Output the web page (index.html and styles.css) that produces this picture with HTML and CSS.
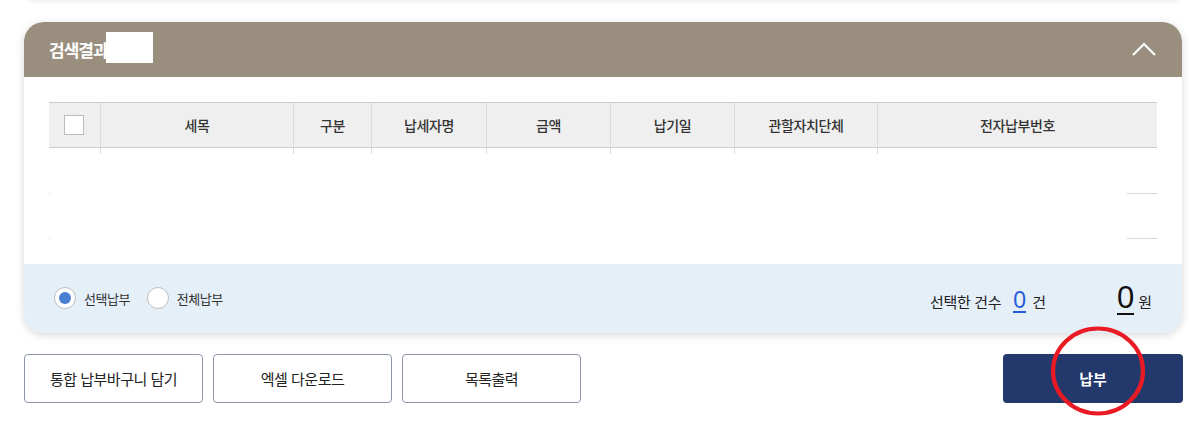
FILE: index.html
```html
<!DOCTYPE html>
<html lang="ko">
<head>
<meta charset="utf-8">
<link rel="stylesheet" href="styles.css">
</head>
<body>
<div class="page">
  <div class="prev-card"></div>
  <section class="card">
    <header class="card-head">
      <h2 class="card-title">검색결과<span class="redact"></span></h2>
      <svg class="chev" width="24" height="14" viewBox="0 0 24 14"><path d="M1 13 L12 2 L23 13" fill="none" stroke="#fff" stroke-width="2.2"/></svg>
    </header>
    <div class="card-body">
      <div class="grid thead">
        <div class="cell"><span class="checkbox"></span></div>
        <div class="cell">세목</div>
        <div class="cell">구분</div>
        <div class="cell">납세자명</div>
        <div class="cell">금액</div>
        <div class="cell">납기일</div>
        <div class="cell">관할자치단체</div>
        <div class="cell">전자납부번호</div>
      </div>
      <div class="grid stub">
        <div class="cell"></div><div class="cell"></div><div class="cell"></div><div class="cell"></div>
        <div class="cell"></div><div class="cell"></div><div class="cell"></div><div class="cell"></div>
      </div>
      <div class="ghost ghost-1"><span class="dot"></span><span class="line"></span></div>
      <div class="ghost ghost-2"><span class="dot"></span><span class="line"></span></div>
    </div>
    <footer class="card-foot">
      <div class="radios">
        <label class="radio"><span class="circle on"></span>선택납부</label>
        <label class="radio"><span class="circle"></span>전체납부</label>
      </div>
      <div class="summary">
        <span class="sum-label">선택한 건수</span>
        <span class="count">0</span>
        <span class="unit">건</span>
        <span class="amount">0</span>
        <span class="unit unit-won">원</span>
      </div>
    </footer>
  </section>
  <div class="actions">
    <div class="left-btns">
      <button class="btn">통합 납부바구니 담기</button>
      <button class="btn">엑셀 다운로드</button>
      <button class="btn">목록출력</button>
    </div>
    <div class="pay-wrap">
      <button class="btn-pay">납부</button>
      <svg class="mark" width="98" height="92" viewBox="0 0 98 92"><ellipse cx="49" cy="46" rx="45" ry="42.5" fill="none" stroke="#ea1a24" stroke-width="4.2"/></svg>
    </div>
  </div>
</div>
</body>
</html>
```

FILE: styles.css
```css
* { box-sizing: border-box; }
html, body { margin: 0; padding: 0; background: #fff; }
body {
  font-family: "Noto Sans CJK KR", "Noto Sans", sans-serif;
  color: #333;
  width: 1189px;
  height: 437px;
  overflow: hidden;
}
.page { padding: 0 6px 0 24px; }
.prev-card {
  height: 10px;
  margin-top: -10px;
  width: 1158px;
  border-radius: 0 0 20px 20px;
  background: #fff;
  box-shadow: 0 2px 5px rgba(0,0,0,0.07);
}
.card {
  margin-top: 22px;
  width: 1158px;
  border-radius: 20px;
  background: #fff;
  box-shadow: 0 2px 8px rgba(0,0,0,0.16);
  overflow: hidden;
}
.card-head {
  height: 55px;
  background: #9a8f7e;
  display: flex;
  align-items: center;
  justify-content: space-between;
  padding: 0 26px 0 25px;
}
.card-title {
  margin: 0;
  color: #fff;
  font-size: 17px;
  font-weight: 700;
  display: flex;
  align-items: center;
  letter-spacing: -1px;
  position: relative;
  height: 55px;
}
.redact {
  position: absolute;
  left: 57px;
  top: 10px;
  width: 47px;
  height: 31px;
  background: #fff;
}
.chev { display: block; margin-top: -2px; }
.card-body { padding: 25px 25px 25px 25px; }
.grid {
  display: grid;
  grid-template-columns: 51px 193px 78px 115px 124px 124px 143px 280px;
}
.thead {
  background: #efefef;
  border-top: 1px solid #ccc;
  border-bottom: 1px solid #ccc;
  height: 46px;
}
.thead .cell {
  display: flex;
  align-items: center;
  justify-content: center;
  font-size: 14px;
  color: #333;
  font-weight: 500;
  letter-spacing: -0.4px;
}
.cell + .cell { border-left: 1px solid #dcdcdc; }
.checkbox {
  width: 20px;
  height: 20px;
  border: 1px solid #bbb;
  background: #fff;
  margin-left: -2px;
}
.stub { height: 6px; }
.ghost {
  display: flex;
  justify-content: space-between;
  align-items: flex-end;
}
.ghost-1 { height: 40px; }
.ghost-2 { height: 45px; }
.dot { width: 1px; height: 1px; background: #d8d8d8; }
.line { width: 30px; height: 1px; background: #d8d8d8; }
.card-foot {
  height: 69px;
  background: #e5eff8;
  display: flex;
  align-items: center;
  justify-content: space-between;
  padding: 0 30px 0 30px;
}
.radios { display: flex; align-items: center; gap: 17px; margin-top: -1px; }
.radio {
  display: flex;
  align-items: center;
  font-size: 13px;
  color: #333;
  letter-spacing: -0.5px;
}
.circle {
  width: 22px;
  height: 22px;
  border-radius: 50%;
  border: 1px solid #bdbdbd;
  background: #fff;
  margin-right: 8px;
  display: flex;
  align-items: center;
  justify-content: center;
}
.circle.on::after {
  content: "";
  width: 12px;
  height: 12px;
  border-radius: 50%;
  background: #4a7fd4;
}
.summary { display: flex; align-items: baseline; }
.sum-label { font-size: 15px; color: #222; letter-spacing: -0.3px; }
.count {
  font-family: "Liberation Sans", "Noto Sans", sans-serif;
  font-size: 23px;
  color: #2a5bd7;
  margin-left: 12px;
  border-bottom: 2px solid #2a5bd7;
  line-height: 22px;
}
.unit { font-size: 15px; color: #222; margin-left: 6px; }
.unit-won { margin-left: 4px; }
.amount {
  font-family: "Liberation Sans", "Noto Sans", sans-serif;
  font-size: 31px;
  color: #111;
  margin-left: 71px;
  border-bottom: 2px solid #111;
  line-height: 30px;
}
.actions {
  margin-top: 21px;
  width: 1159px;
  display: flex;
  justify-content: space-between;
}
.left-btns { display: flex; gap: 10px; }
.btn {
  width: 179px;
  height: 49px;
  background: #fff;
  border: 1px solid #8c95ad;
  border-radius: 4px;
  font-family: inherit;
  font-size: 15px;
  color: #222;
  letter-spacing: -0.5px;
  padding: 0;
}
.pay-wrap { position: relative; }
.btn-pay {
  width: 180px;
  height: 49px;
  background: #23386b;
  border: none;
  border-radius: 4px;
  color: #fff;
  font-family: inherit;
  font-size: 15px;
  font-weight: 700;
  padding: 0;
  display: block;
}
.mark {
  position: absolute;
  left: 46px;
  top: -29px;
  pointer-events: none;
}
```
